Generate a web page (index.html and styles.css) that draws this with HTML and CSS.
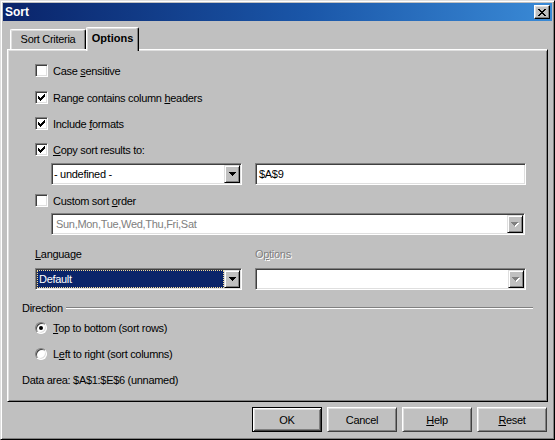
FILE: index.html
```html
<!DOCTYPE html>
<html>
<head>
<meta charset="utf-8">
<title>Sort</title>
<link rel="stylesheet" href="styles.css">
</head>
<body>
<div class="window">
  <div class="titlebar">
    <span class="title">Sort</span>
    <span class="close"><svg width="8" height="7" viewBox="0 0 8 7"><path d="M0 0h2v1H0z M6 0h2v1H6z M1 1h2v1H1z M5 1h2v1H5z M2 2h4v1H2z M3 3h2v1H3z M2 4h4v1H2z M1 5h2v1H1z M5 5h2v1H5z M0 6h2v1H0z M6 6h2v1H6z" fill="#000"/></svg></span>
  </div>
  <div class="tabs">
    <div class="tab tab-criteria">Sort Criteria</div>
    <div class="tab tab-active">Options</div>
  </div>
  <div class="panel">
    <div class="row check indent">
      <span class="cb"></span><span>Case <u>s</u>ensitive</span>
    </div>
    <div class="row check indent mt12">
      <span class="cb"><svg width="7" height="7" viewBox="0 0 7 7"><path d="M6 0h1v1H6z M5 1h2v1H5z M0 2h1v1H0z M4 2h3v1H4z M0 3h2v1H0z M3 3h3v1H3z M0 4h5v1H0z M1 5h3v1H1z M2 6h1v1H2z" fill="#000"/></svg></span><span>Range contains column <u>h</u>eaders</span>
    </div>
    <div class="row check indent mt11">
      <span class="cb"><svg width="7" height="7" viewBox="0 0 7 7"><path d="M6 0h1v1H6z M5 1h2v1H5z M0 2h1v1H0z M4 2h3v1H4z M0 3h2v1H0z M3 3h3v1H3z M0 4h5v1H0z M1 5h3v1H1z M2 6h1v1H2z" fill="#000"/></svg></span><span>Include <u>f</u>ormats</span>
    </div>
    <div class="row check indent mt11">
      <span class="cb"><svg width="7" height="7" viewBox="0 0 7 7"><path d="M6 0h1v1H6z M5 1h2v1H5z M0 2h1v1H0z M4 2h3v1H4z M0 3h2v1H0z M3 3h3v1H3z M0 4h5v1H0z M1 5h3v1H1z M2 6h1v1H2z" fill="#000"/></svg></span><span><u>C</u>opy sort results to:</span>
    </div>
    <div class="row field-row indent2 mt6">
      <div class="combo w-copy">
        <span class="val">- undefined -</span>
        <span class="drop"><svg width="7" height="4" viewBox="0 0 7 4"><path d="M0 0h7v1H0z M1 1h5v1H1z M2 2h3v1H2z M3 3h1v1H3z" fill="#000"/></svg></span>
      </div>
      <div class="textbox w-right">$A$9</div>
    </div>
    <div class="row check indent mt8">
      <span class="cb"></span><span>Custom sort <u>o</u>rder</span>
    </div>
    <div class="row field-row indent2 mt5">
      <div class="combo w-full disabled">
        <span class="val">Sun,Mon,Tue,Wed,Thu,Fri,Sat</span>
        <span class="drop"><svg width="8" height="5" viewBox="0 0 8 5"><path d="M1 1h7v1H1z M2 2h5v1H2z M3 3h3v1H3z M4 4h1v1H4z" fill="#fff"/><path d="M0 0h7v1H0z M1 1h5v1H1z M2 2h3v1H2z M3 3h1v1H3z" fill="#808080"/></svg></span>
      </div>
    </div>
    <div class="row labels indent mt12">
      <span class="lbl-lang"><u>L</u>anguage</span>
      <span class="lbl-disabled">O<u>p</u>tions</span>
    </div>
    <div class="row field-row indent mt7">
      <div class="combo w-lang">
        <span class="val selected">Default</span>
        <span class="drop"><svg width="7" height="4" viewBox="0 0 7 4"><path d="M0 0h7v1H0z M1 1h5v1H1z M2 2h3v1H2z M3 3h1v1H3z" fill="#000"/></svg></span>
      </div>
      <div class="combo w-right disabled">
        <span class="val"></span>
        <span class="drop"><svg width="8" height="5" viewBox="0 0 8 5"><path d="M1 1h7v1H1z M2 2h5v1H2z M3 3h3v1H3z M4 4h1v1H4z" fill="#fff"/><path d="M0 0h7v1H0z M1 1h5v1H1z M2 2h3v1H2z M3 3h1v1H3z" fill="#808080"/></svg></span>
      </div>
    </div>
    <div class="row group-head mt11">
      <span>Direction</span><span class="etch"></span>
    </div>
    <div class="row radio-row indent mt6">
      <span class="radio"><span class="dot"></span></span><span><u>T</u>op to bottom (sort rows)</span>
    </div>
    <div class="row radio-row indent mt12">
      <span class="radio"></span><span>L<u>e</u>ft to right (sort columns)</span>
    </div>
    <div class="row info mt12">Data area: $A$1:$E$6 (unnamed)</div>
  </div>
  <div class="buttons">
    <div class="btn btn-default">OK</div>
    <div class="btn">Cancel</div>
    <div class="btn"><u>H</u>elp</div>
    <div class="btn"><u>R</u>eset</div>
  </div>
</div>
</body>
</html>
```

FILE: styles.css
```css
* { box-sizing: border-box; }
body {
  margin: 0;
  font: 11px "Liberation Sans", Arial, sans-serif;
  letter-spacing: -0.3px;
  color: #000;
}
u { text-decoration: underline; text-underline-offset: 1px; }

.window {
  width: 555px;
  height: 440px;
  background: #c0c0c0;
  border: 1px solid;
  border-color: #dfdfdf #000 #000 #dfdfdf;
  box-shadow: inset 1px 1px #fff, inset -1px -1px #808080;
  padding: 2px;
  display: flex;
  flex-direction: column;
}

.titlebar {
  height: 18px;
  background: linear-gradient(to right, #0a246a 0%, #1a56a8 55%, #3a8ad6 100%);
  display: flex;
  align-items: center;
  justify-content: space-between;
  padding: 0 2px;
}
.title {
  color: #fff;
  font-weight: bold;
  font-size: 12px;
  letter-spacing: 0;
}
.close {
  width: 16px;
  height: 14px;
  background: #c0c0c0;
  border: 1px solid;
  border-color: #fff #000 #000 #fff;
  box-shadow: inset -1px -1px #808080, inset 1px 1px #dfdfdf;
  display: flex;
  align-items: center;
  justify-content: center;
}

.tabs {
  margin-top: 6px;
  height: 22px;
  display: flex;
  align-items: flex-end;
  padding-left: 7px;
}
.tab {
  height: 20px;
  background: #c0c0c0;
  border-top: 1px solid #fff;
  border-left: 1px solid #fff;
  border-right: 1px solid #000;
  border-radius: 2px 2px 0 0;
  box-shadow: inset -1px 0 #808080, inset 1px 1px #dfdfdf;
  display: flex;
  align-items: center;
  justify-content: center;
  padding-bottom: 1px;
}
.tab-criteria { width: 76px; }
.tab-active {
  position: relative;
  z-index: 1;
  width: 53px;
  height: 24px;
  margin-bottom: -2px;
  font-weight: bold;
  letter-spacing: 0;
  padding-bottom: 4px;
}

.panel {
  margin: 0 4px;
  height: 353px;
  border: 1px solid;
  border-color: #fff #000 #000 #fff;
  box-shadow: inset 1px 1px #dfdfdf, inset -1px -1px #808080;
  padding: 13px 14px 0 14px;
  display: flex;
  flex-direction: column;
}

.row { display: flex; align-items: center; }
.check { height: 15px; }
.indent { margin-left: 13px; }
.indent2 { margin-left: 29px; }
.mt5 { margin-top: 5px; }
.mt6 { margin-top: 6px; }
.mt7 { margin-top: 7px; }
.mt8 { margin-top: 8px; }
.mt11 { margin-top: 11px; }
.mt12 { margin-top: 12px; }

.cb {
  width: 13px;
  height: 13px;
  flex: none;
  background: #fff;
  border: 1px solid;
  border-color: #808080 #fff #fff #808080;
  box-shadow: inset 1px 1px #404040, inset -1px -1px #dfdfdf;
  margin-right: 5px;
  display: flex;
  align-items: center;
  justify-content: center;
}
.cb svg { display: block; }

.field-row { height: 22px; gap: 13px; }
.combo, .textbox {
  height: 22px;
  background: #fff;
  border: 1px solid;
  border-color: #808080 #fff #fff #808080;
  box-shadow: inset 1px 1px #404040, inset -1px -1px #dfdfdf;
  padding: 1px;
  display: flex;
  align-items: stretch;
}
.textbox { align-items: center; padding-left: 3px; }
.w-copy { width: 191px; }
.w-right { width: 271px; }
.w-full { width: 474px; }
.w-lang { width: 207px; }

.val {
  flex: 1;
  display: flex;
  align-items: center;
  padding-left: 1px;
  white-space: nowrap;
  overflow: hidden;
}
.disabled .val { color: #808080; padding-left: 3px; }
.val.selected {
  background: #0a246a;
  color: #fff;
  border: 1px dotted #f5db95;
  padding-left: 1px;
}
.drop {
  width: 16px;
  flex: none;
  background: #c0c0c0;
  border: 1px solid;
  border-color: #dfdfdf #000 #000 #dfdfdf;
  box-shadow: inset 1px 1px #fff, inset -1px -1px #808080;
  display: flex;
  align-items: center;
  justify-content: center;
}
.drop svg { display: block; }

.labels { height: 14px; }
.lbl-lang { width: 220px; }
.lbl-disabled { color: #808080; text-shadow: 1px 1px #fff; }

.group-head { height: 14px; }
.etch {
  flex: 1;
  height: 2px;
  margin-left: 3px;
  border-top: 1px solid #808080;
  border-bottom: 1px solid #fff;
}

.radio-row { height: 14px; }
.radio {
  width: 12px;
  height: 12px;
  flex: none;
  border-radius: 50%;
  background: #fff;
  border: 1px solid;
  border-color: #808080 #fff #fff #808080;
  box-shadow: inset 1px 1px #404040, inset -1px -1px #dfdfdf;
  margin-right: 6px;
  display: flex;
  align-items: center;
  justify-content: center;
}
.dot {
  width: 4px;
  height: 4px;
  border-radius: 50%;
  background: #000;
}

.info { height: 14px; }

.buttons {
  margin-top: 5px;
  height: 25px;
  display: flex;
  justify-content: flex-end;
  gap: 5px;
  padding-right: 5px;
}
.btn {
  width: 70px;
  height: 25px;
  border: 1px solid;
  border-color: #fff #404040 #404040 #fff;
  box-shadow: inset 1px 1px #dfdfdf, inset -1px -1px #808080;
  display: flex;
  align-items: center;
  justify-content: center;
}
.btn-default {
  border-color: #000;
  box-shadow: inset 1px 1px #fff, inset -1px -1px #404040, inset 2px 2px #dfdfdf, inset -2px -2px #808080;
}
```
